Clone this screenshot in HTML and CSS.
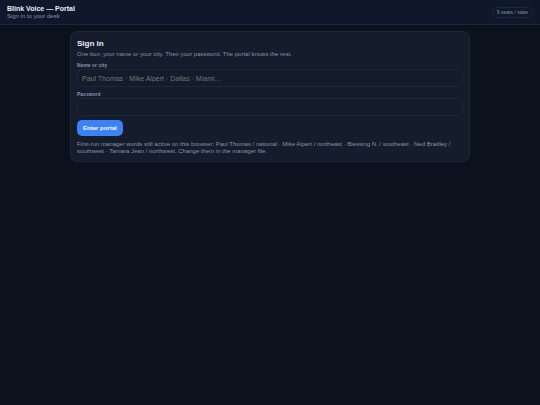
FILE: index.html
```html
<!DOCTYPE html>
<html lang="en">
<head>
	<meta charset="utf-8">
	<meta name="viewport" content="width=device-width, initial-scale=1.0">
	<title>Blink Voice — Portal</title>
	<link rel="stylesheet" href="styles.css">
</head>
<body>
	<header class="top">
		<div>
			<h1>Blink Voice — Portal</h1>
			<p class="sub">Sign in to your desk</p>
		</div>
		<span class="pill">9 seats / state</span>
	</header>
	<main class="wrap">
		<form class="card">
			<h2>Sign in</h2>
			<p class="muted">One box: your name or your city. Then your password. The portal knows the rest.</p>
			<label for="who">Name or city</label>
			<input id="who" type="text" autocomplete="username" placeholder="Paul Thomas · Mike Alpert · Dallas · Miami…">
			<label for="pw">Password</label>
			<input id="pw" type="password" autocomplete="current-password">
			<button id="enter" type="button">Enter portal</button>
			<p class="muted hint">First-run manager words still active on this browser: Paul Thomas / national · Mike Alpert / northeast · Blessing N. / southeast · Ned Bradley / southwest · Tamara Jean / northwest. Change them in the manager file.</p>
		</form>
	</main>
</body>
</html>
```
FILE: styles.css
```css
	* {
		box-sizing: border-box;
	}
	body {
		margin: 0;
		min-height: 100vh;
		background-color: #0b121e;
		color: #e8eef9;
		font-family: "Liberation Sans", Arial, sans-serif;
		font-size: 6px;
		line-height: 7px;
	}
	h1, h2, p {
		margin: 0;
	}
	.top {
		display: flex;
		align-items: center;
		justify-content: space-between;
		padding: 5px 7px 4px;
		background-color: #0f182a;
		border-bottom: 1px solid #1b273a;
	}
	h1 {
		font-size: 7px;
		line-height: 8px;
	}
	.sub {
		color: #8492ab;
	}
	.pill {
		padding: 1px 4px;
		border: 1px solid #1b273a;
		border-radius: 99px;
		font-size: 5px;
		color: #8492ab;
	}
	.wrap {
		max-width: 400px;
		margin: 6px auto;
	}
	.card {
		padding: 7px 6px 6px;
		background-color: #151d2c;
		border: 1px solid #1e2938;
		border-radius: 7px;
	}
	h2 {
		font-size: 8px;
		line-height: 9px;
		margin-bottom: 3px;
	}
	.muted {
		color: #8492ab;
	}
	label {
		display: block;
		margin: 4px 0 0;
		font-size: 5px;
		font-weight: bold;
		color: #8492ab;
	}
	input {
		display: block;
		width: 100%;
		height: 18px;
		padding: 0 4px;
		background-color: #131c2a;
		border: 1px solid #1c2837;
		border-radius: 5px;
		color: #e8eef9;
		font-family: inherit;
		font-size: 7px;
	}
	input::placeholder {
		color: #757575;
	}
	input:focus {
		outline: none;
		border-color: #3b82f6;
	}
	button {
		display: block;
		height: 16px;
		margin-top: 4px;
		padding: 0 6px;
		background-color: #3b82f6;
		border: none;
		border-radius: 5px;
		color: #fff;
		font-family: inherit;
		font-size: 6px;
		font-weight: bold;
		cursor: pointer;
	}
	.hint {
		margin-top: 5px;
	}
```
